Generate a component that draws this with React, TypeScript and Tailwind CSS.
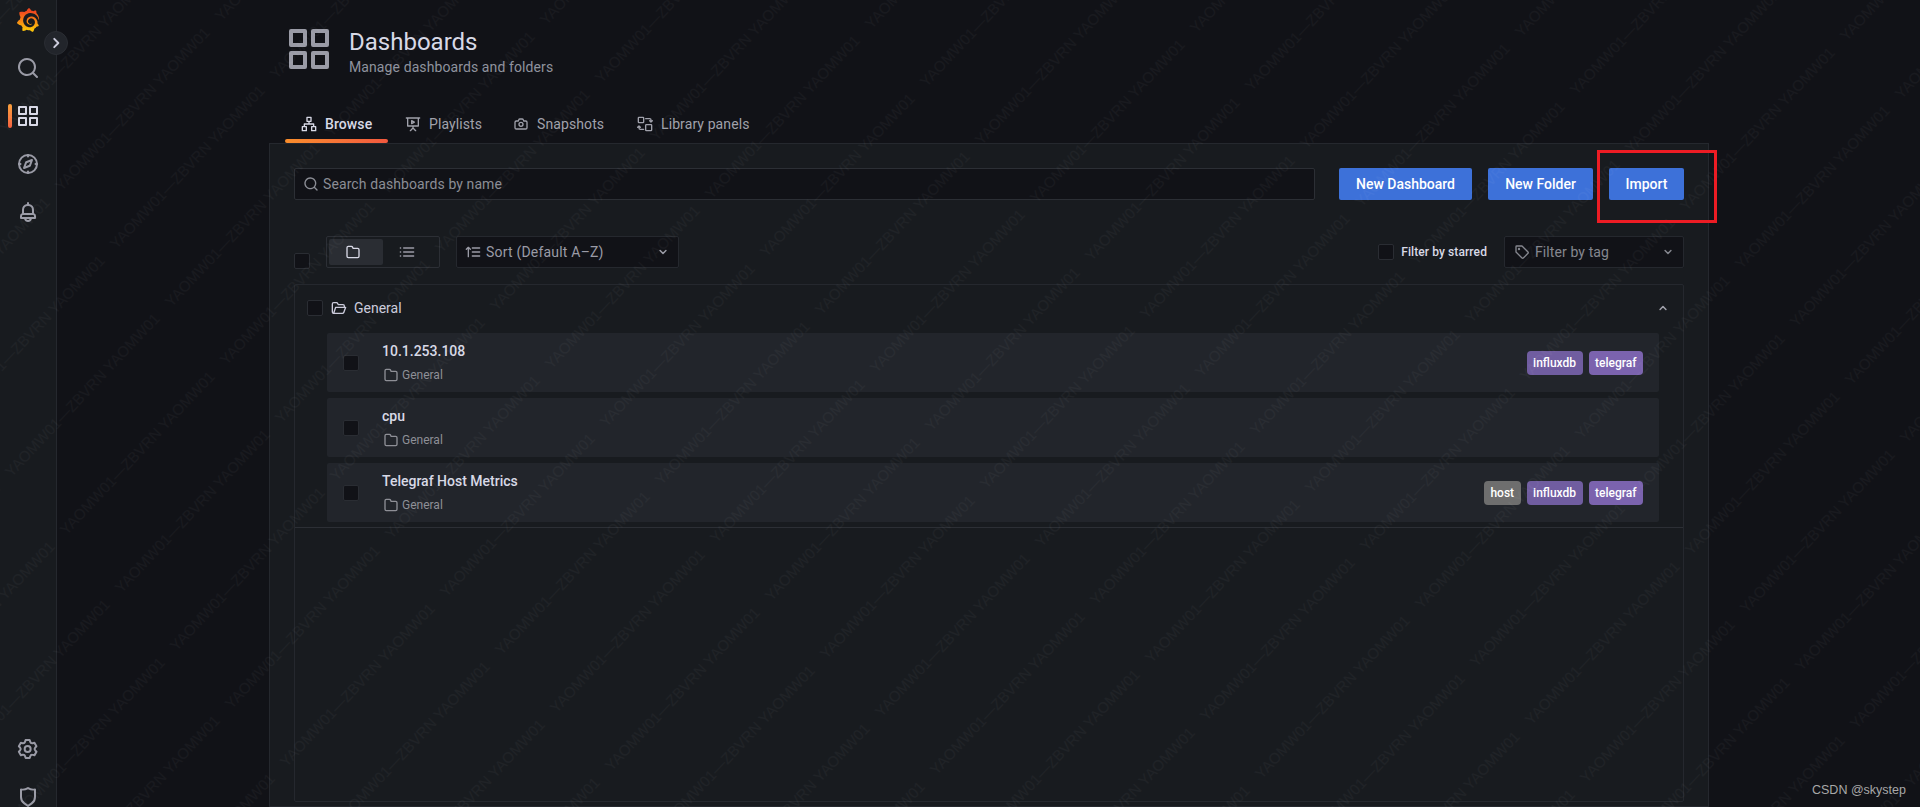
import { SiGrafana } from "react-icons/si";

type IconProps = { d: string; className: string };
const Ico = ({ d, className }: IconProps) => (
  <svg viewBox="0 0 24 24" fill="currentColor" className={className}>
    <path d={d} />
  </svg>
);

const P = {
  apps: "M10,13H3a1,1,0,0,0-1,1v7a1,1,0,0,0,1,1h7a1,1,0,0,0,1-1V14A1,1,0,0,0,10,13ZM9,20H4V15H9ZM21,2H14a1,1,0,0,0-1,1v7a1,1,0,0,0,1,1h7a1,1,0,0,0,1-1V3A1,1,0,0,0,21,2ZM20,9H15V4h5Zm1,4H14a1,1,0,0,0-1,1v7a1,1,0,0,0,1,1h7a1,1,0,0,0,1-1V14A1,1,0,0,0,21,13Zm-1,7H15V15h5ZM10,2H3A1,1,0,0,0,2,3v7a1,1,0,0,0,1,1h7a1,1,0,0,0,1-1V3A1,1,0,0,0,10,2ZM9,9H4V4H9Z",
  search: "M21.71,20.29,18,16.61A9,9,0,1,0,16.61,18l3.68,3.68a1,1,0,0,0,1.42,0A1,1,0,0,0,21.71,20.29ZM11,18a7,7,0,1,1,7-7A7,7,0,0,1,11,18Z",
  bell: "M18,13.18V10a6,6,0,0,0-5-5.91V3a1,1,0,0,0-2,0V4.09A6,6,0,0,0,6,10v3.18A3,3,0,0,0,4,16v2a1,1,0,0,0,1,1H8.14a4,4,0,0,0,7.72,0H19a1,1,0,0,0,1-1V16A3,3,0,0,0,18,13.18ZM8,10a4,4,0,0,1,8,0v3H8Zm4,10a2,2,0,0,1-1.72-1h3.44A2,2,0,0,1,12,20Zm6-3H6V16a1,1,0,0,1,1-1H17a1,1,0,0,1,1,1Z",
  cog: "M19.9,12.66a1,1,0,0,1,0-1.32L21.18,9.9a1,1,0,0,0,.12-1.17l-2-3.46a1,1,0,0,0-1.07-.48l-1.88.38a1,1,0,0,1-1.15-.66l-.61-1.83A1,1,0,0,0,13.64,2h-4a1,1,0,0,0-1,.68L8.08,4.51a1,1,0,0,1-1.15.66L5,4.79A1,1,0,0,0,4,5.27L2,8.73A1,1,0,0,0,2.1,9.9l1.27,1.44a1,1,0,0,1,0,1.32L2.1,14.1A1,1,0,0,0,2,15.27l2,3.46a1,1,0,0,0,1.07.48l1.88-.38a1,1,0,0,1,1.15.66l.61,1.83a1,1,0,0,0,1,.68h4a1,1,0,0,0,.95-.68l.61-1.83a1,1,0,0,1,1.15-.66l1.88.38a1,1,0,0,0,1.07-.48l2-3.46a1,1,0,0,0-.12-1.17ZM18.41,14l.8.9-1.28,2.22-1.18-.24a3,3,0,0,0-3.45,2L12.92,20H10.36L10,18.86a3,3,0,0,0-3.45-2l-1.18.24L4.07,14.89l.8-.9a3,3,0,0,0,0-4l-.8-.9L5.35,6.89l1.18.24a3,3,0,0,0,3.45-2L10.36,4h2.56l.38,1.14a3,3,0,0,0,3.45,2l1.18-.24,1.28,2.22-.8.9A3,3,0,0,0,18.41,14ZM11.64,8a4,4,0,1,0,4,4A4,4,0,0,0,11.64,8Zm0,6a2,2,0,1,1,2-2A2,2,0,0,1,11.64,14Z",
  shield: "M19.63,3.65a1,1,0,0,0-.84-.2,8,8,0,0,1-6.22-1.27,1,1,0,0,0-1.14,0A8,8,0,0,1,5.21,3.45a1,1,0,0,0-.84.2A1,1,0,0,0,4,4.43v7.45a9,9,0,0,0,3.77,7.33l3.65,2.6a1,1,0,0,0,1.16,0l3.65-2.6A9,9,0,0,0,20,11.88V4.43A1,1,0,0,0,19.63,3.65ZM18,11.88a7,7,0,0,1-2.93,5.7L12,19.77,8.93,17.58A7,7,0,0,1,6,11.88V5.58a10,10,0,0,0,6-1.39,10,10,0,0,0,6,1.39Z",
  sitemap: "M22,15H20V12a1,1,0,0,0-1-1H13V9h2a1,1,0,0,0,1-1V2a1,1,0,0,0-1-1H9A1,1,0,0,0,8,2V8a1,1,0,0,0,1,1h2v2H5a1,1,0,0,0-1,1v3H2a1,1,0,0,0-1,1v6a1,1,0,0,0,1,1H8a1,1,0,0,0,1-1V16a1,1,0,0,0-1-1H6V13H18v2H16a1,1,0,0,0-1,1v6a1,1,0,0,0,1,1h6a1,1,0,0,0,1-1V16A1,1,0,0,0,22,15ZM7,17v4H3V17ZM10,7V3h4V7ZM21,21H17V17h4Z",
  camera: "M19,6.5H16.72l-.32-1a3,3,0,0,0-2.84-2H10.44A3,3,0,0,0,7.6,5.55l-.32,1H5a3,3,0,0,0-3,3v8a3,3,0,0,0,3,3H19a3,3,0,0,0,3-3v-8A3,3,0,0,0,19,6.5Zm1,11a1,1,0,0,1-1,1H5a1,1,0,0,1-1-1v-8a1,1,0,0,1,1-1H8a1,1,0,0,0,1-.68l.54-1.64a1,1,0,0,1,.95-.68h3.12a1,1,0,0,1,.95.68l.54,1.64A1,1,0,0,0,16,8.5h3a1,1,0,0,1,1,1Zm-8-9a4,4,0,1,0,4,4A4,4,0,0,0,12,8.5Zm0,6a2,2,0,1,1,2-2A2,2,0,0,1,12,14.5Z",
  folder: "M19,5.5H12.72l-.32-1a3,3,0,0,0-2.84-2H5a3,3,0,0,0-3,3v13a3,3,0,0,0,3,3H19a3,3,0,0,0,3-3V8.5A3,3,0,0,0,19,5.5Zm1,13a1,1,0,0,1-1,1H5a1,1,0,0,1-1-1V5.5a1,1,0,0,1,1-1H9.56a1,1,0,0,1,.95.68l.54,1.64A1,1,0,0,0,12,7.5h7a1,1,0,0,1,1,1Z",
};

const Stroke = ({ className, children, w = 2 }: { className: string; children: React.ReactNode; w?: number }) => (
  <svg viewBox="0 0 24 24" fill="none" stroke="currentColor" strokeWidth={w} strokeLinecap="round" strokeLinejoin="round" className={className}>
    {children}
  </svg>
);

const Compass = ({ className }: { className: string }) => (
  <Stroke className={className}>
    <circle cx="12" cy="12" r="9" />
    <path d="M16 8l-2.2 5.8L8 16l2.2-5.8z" />
    <path d="M12 3v1.5M12 19.5V21M3 12h1.5M19.5 12H21" />
  </Stroke>
);
const Present = ({ className }: { className: string }) => (
  <Stroke className={className}>
    <path d="M2 3h20M4 3v12h16V3M12 15v3M8 22l4-4 4 4" />
    <path d="M10 7l4 2.2-4 2.2z" />
  </Stroke>
);
const Library = ({ className }: { className: string }) => (
  <Stroke className={className}>
    <rect x="2" y="2" width="8" height="8" rx="1" />
    <rect x="13" y="13" width="9" height="9" rx="1" />
    <path d="M13 4h6a2 2 0 0 1 2 2v3l-2-2M21 9l2-2" />
    <path d="M10 20H5a2 2 0 0 1-2-2v-3l-2 2M3 15l2 2" />
  </Stroke>
);
const ListIcon = ({ className }: { className: string }) => (
  <Stroke className={className}>
    <path d="M7 6h15M7 12h15M7 18h15M2 6h.5M2 12h.5M2 18h.5" />
  </Stroke>
);
const SortIcon = ({ className }: { className: string }) => (
  <Stroke className={className}>
    <path d="M5 19V5M2 8l3-3 3 3M11 6h11M11 12h11M11 18h11" />
  </Stroke>
);
const TagIcon = ({ className }: { className: string }) => (
  <Stroke className={className}>
    <path d="M3 4a1 1 0 0 1 1-1h8l9 9a1.5 1.5 0 0 1 0 2l-7 7a1.5 1.5 0 0 1-2 0l-9-9z" />
    <circle cx="7.5" cy="7.5" r=".8" />
  </Stroke>
);
const FolderOpen = ({ className }: { className: string }) => (
  <Stroke className={className}>
    <path d="M4 20a2 2 0 0 1-2-2V6a2 2 0 0 1 2-2h5l2 3h7a2 2 0 0 1 2 2v2" />
    <path d="M4 20l3-9h15l-3 8a2 2 0 0 1-2 1z" />
  </Stroke>
);
const Chevron = ({ up, className }: { up?: boolean; className: string }) => (
  <Stroke className={className} w={2.6}>
    <path d={up ? "M7 14.5l5-5 5 5" : "M7 9.5l5 5 5-5"} />
  </Stroke>
);

const Box = ({ extra = "" }: { extra?: string }) => (
  <div className={"h-4 w-4 shrink-0 rounded-[2px] border border-[#2a2d33] bg-[#111217] " + extra} />
);

const Button = ({ label, w }: { label: string; w: string }) => (
  <button className={"flex h-8 items-center justify-center rounded-[2px] bg-[#3d71d9] text-sm font-medium text-white " + w}>{label}</button>
);

const tabs = [
  { label: "Browse", active: true, w: "w-[104px]", icon: <Ico d={P.sitemap} className="h-4 w-4" /> },
  { label: "Playlists", w: "w-[108px]", icon: <Present className="h-4 w-4" /> },
  { label: "Snapshots", w: "w-[124px]", icon: <Ico d={P.camera} className="h-4 w-4" /> },
  { label: "Library panels", w: "w-[145px]", icon: <Library className="h-4 w-4" /> },
];

const tagColor: Record<string, string> = {
  host: "bg-[#6e6e6e]",
  influxdb: "bg-[#705da0]",
  telegraf: "bg-[#7b63ae]",
};

const rows = [
  { title: "10.1.253.108", tags: ["influxdb", "telegraf"] },
  { title: "cpu", tags: [] as string[] },
  { title: "Telegraf Host Metrics", tags: ["host", "influxdb", "telegraf"] },
];

const marks: { x: number; y: number }[] = [];
for (let i = -8; i < 14; i++) {
  for (let j = -16; j < 16; j++) {
    const x = 613 + i * 160 + j * 55;
    const y = 773 - i * 170 + j * 58;
    if (x > -220 && x < 1940 && y > -20 && y < 960) marks.push({ x, y });
  }
}

export default function App() {
  return (
    <div className="relative flex h-[807px] w-[1920px] overflow-hidden bg-[#111217] font-['Roboto',sans-serif] text-[#ccccdc]">
      <svg className="absolute h-0 w-0">
        <defs>
          <linearGradient id="grafanaLogo" x1="0" y1="1" x2="0" y2="0">
            <stop offset="0.1" stopColor="#fcc30a" />
            <stop offset="0.85" stopColor="#f0481f" />
          </linearGradient>
        </defs>
      </svg>

      <aside className="relative flex h-full w-[57px] shrink-0 flex-col items-center border-r border-[#25282e] bg-[#181b1f] text-[#9a9ba6]">
        <div className="mt-2 h-6 w-6 text-[#f15a22]">
          <SiGrafana fill="url(#grafanaLogo)" className="h-6 w-6" />
        </div>
        <div className="absolute left-[44px] top-[31px] flex h-6 w-6 items-center justify-center rounded-full border border-[#2a2d33] bg-[#22252b] text-[#ccccdc]">
          <svg viewBox="0 0 24 24" fill="none" stroke="currentColor" strokeWidth={3.4} strokeLinecap="round" strokeLinejoin="round" className="h-[14px] w-[14px]"><path d="M9 5l7 7-7 7" /></svg>
        </div>
        <div className="mt-6 flex flex-col items-center gap-6">
          <Ico d={P.search} className="h-6 w-6" />
          <div className="relative">
            <div className="absolute left-[-8px] top-0 h-6 w-1 rounded-sm bg-gradient-to-b from-[#f9a13d] to-[#f55f3e]" />
            <Ico d={P.apps} className="h-6 w-6 text-[#d8d9e6]" />
          </div>
          <Compass className="h-6 w-6" />
          <Ico d={P.bell} className="h-6 w-6" />
        </div>
        <div className="mb-[-2px] mt-auto flex flex-col items-center gap-6">
          <Ico d={P.cog} className="h-6 w-6" />
          <Ico d={P.shield} className="h-6 w-6" />
        </div>
      </aside>

      <main className="ml-[212px] flex w-[1440px] shrink-0 flex-col">
        <header className="flex h-[105px] pl-4 pt-[25px]">
          <Ico d={P.apps} className="h-12 w-12 text-[#9a9ba6]" />
          <div className="ml-4 flex flex-col">
            <h1 className="text-2xl leading-[34px] font-normal text-[#d8d9e6]">Dashboards</h1>
            <p className="text-sm leading-[16px] tracking-[0.1px] text-[#8f939e]">Manage dashboards and folders</p>
          </div>
        </header>

        <nav className="flex h-[38px] pl-4">
          {tabs.map((t) => (
            <div key={t.label} className={"relative flex items-center gap-2 pb-[1px] pl-4 text-sm tracking-[0.1px] " + t.w + (t.active ? " font-medium text-[#d8d9e6]" : " text-[#a0a1ab]")}>
              {t.icon}
              <span>{t.label}</span>
              {t.active && <div className="absolute bottom-0 left-0 h-1 w-[103px] rounded-sm bg-gradient-to-r from-[#f98d2b] to-[#f2583e]" />}
            </div>
          ))}
        </nav>

        <section className="flex-1 border border-[#25282e] bg-[#181b1f] px-6 pt-6">
          <div className="flex">
            <div className="flex h-8 flex-1 items-center gap-1 rounded-[2px] border border-[#2c2f35] bg-[#111217] px-2 text-sm tracking-[0.1px] text-[#8b8d95]">
              <Ico d={P.search} className="h-4 w-4" />
              <span>Search dashboards by name</span>
            </div>
            <div className="ml-6 flex gap-4">
              <Button label="New Dashboard" w="w-[133px]" />
              <Button label="New Folder" w="w-[105px]" />
              <Button label="Import" w="w-[75px]" />
            </div>
          </div>

          <div className="mt-9 flex h-8 items-center">
            <Box extra="mr-4 mt-[18px]" />
            <div className="flex h-8 w-[114px] items-center rounded-[2px] border border-[#2c2f35] px-[2px]">
              <div className="flex h-[26px] w-[54px] items-center justify-center rounded-[2px] bg-[#2a2d33] pr-[6px] text-[#d8d9e6]">
                <Ico d={P.folder} className="h-4 w-4" />
              </div>
              <div className="flex h-[26px] w-[54px] items-center justify-center pr-[6px] text-[#9a9ba6]">
                <ListIcon className="h-4 w-4" />
              </div>
            </div>
            <div className="ml-4 flex h-8 w-[223px] items-center rounded-[2px] border border-[#25282e] bg-[#111217] pl-2 pr-2 text-sm tracking-[0.2px] text-[#9a9ba6]">
              <SortIcon className="h-4 w-4" />
              <span className="ml-[5px]">Sort (Default A–Z)</span>
              <Chevron className="ml-auto h-[14px] w-[14px]" />
            </div>
            <Box extra="ml-auto" />
            <span className="ml-[7px] text-xs font-medium tracking-[0.1px] text-[#d8d9e6]">Filter by starred</span>
            <div className="ml-[17px] flex h-8 w-[180px] items-center rounded-[2px] border border-[#25282e] bg-[#111217] pl-[9px] pr-2 text-sm tracking-[0.1px] text-[#85878f]">
              <TagIcon className="h-4 w-4" />
              <span className="ml-[5px]">Filter by tag</span>
              <Chevron className="ml-auto h-[14px] w-[14px]" />
            </div>
          </div>

          <div className="mt-4 h-[518px] rounded-[2px] border border-[#25282e]">
            <div className="h-[243px] border-b border-[#2c2f35]">
              <div className="mb-[2px] flex h-[46px] items-center pl-3 pr-[13px] text-sm">
                <Box />
                <FolderOpen className="ml-2 h-4 w-4" />
                <span className="ml-[7px]">General</span>
                <Chevron up className="ml-auto h-[14px] w-[14px] text-[#a0a1ab]" />
              </div>
              <div className="ml-8 mr-6 flex flex-col gap-[6px]">
                {rows.map((r) => (
                  <div key={r.title} className="flex h-[59px] items-center rounded-[2px] bg-[#22252b] pl-4 pr-4">
                    <Box extra="bg-[#0f1014]" />
                    <div className="ml-[23px] flex flex-col">
                      <span className="text-sm leading-[16px] font-medium text-[#d8d9e6]">{r.title}</span>
                      <span className="mt-2 flex items-center pl-[1px] text-xs leading-[16px] text-[#8e8f96]">
                        <Ico d={P.folder} className="h-4 w-4" />
                        <span className="ml-[3px]">General</span>
                      </span>
                    </div>
                    <div className="ml-auto flex gap-[6px]">
                      {r.tags.map((t) => (
                        <span key={t} className={"flex h-6 items-center rounded-[4px] px-[6.5px] text-xs font-medium text-white " + tagColor[t]}>{t}</span>
                      ))}
                    </div>
                  </div>
                ))}
              </div>
            </div>
          </div>
        </section>
      </main>

      <div className="pointer-events-none absolute inset-0 overflow-hidden">
        {marks.map((m) => (
          <span
            key={m.x + "," + m.y}
            className="absolute origin-bottom-left whitespace-nowrap font-['Liberation_Sans',sans-serif] text-[15px] leading-none text-white/[0.035]"
            style={{ left: m.x, top: m.y - 15, transform: "rotate(-46.7deg)" }}
          >
            YAOMW01—ZBVRN YAOMW01
          </span>
        ))}
      </div>

      <div className="pointer-events-none absolute left-[1597px] top-[150px] h-[73px] w-[120px] border-[3px] border-[#ed1c24]" />
      <span className="absolute left-[1812px] top-[782px] font-['Liberation_Sans',sans-serif] text-[12.5px] leading-4 text-[#a8a8a8]">CSDN @skystep</span>
    </div>
  );
}
